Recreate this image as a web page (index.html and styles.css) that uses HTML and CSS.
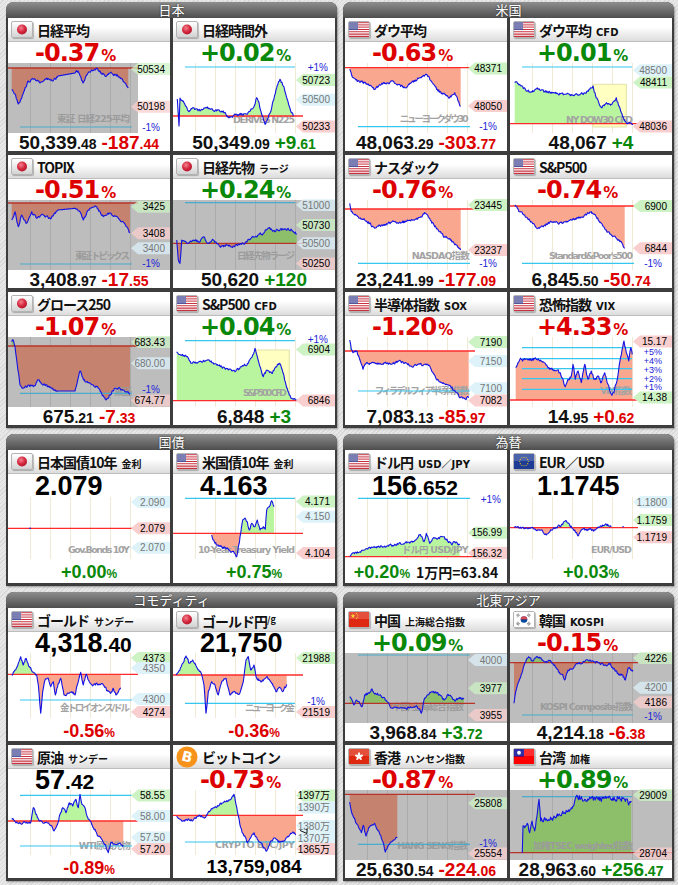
FILE: index.html
```html
<!DOCTYPE html>
<html lang="ja">
<head>
<meta charset="utf-8">
<title>マーケット</title>
<link rel="stylesheet" href="styles.css">
</head>
<body>
<svg class="defs" width="0" height="0" aria-hidden="true">
<defs>
<radialGradient id="jpr" cx=".4" cy=".35" r=".7"><stop offset="0" stop-color="#f3828e"/><stop offset=".6" stop-color="#d3243b"/><stop offset="1" stop-color="#b0182c"/></radialGradient>
<pattern id="st" width="1.8" height="1.6" patternUnits="userSpaceOnUse"><rect x=".5" y=".4" width=".7" height=".7" fill="#d8dcf0"/></pattern>
<polygon id="tg" points="123,0 130,-6 162,-6 162,6 130,6"/>
<g id="jp"><circle cx="10" cy="7.5" r="5" fill="url(#jpr)"/></g>
<g id="us"><rect width="20" height="15" fill="#fff"/><path fill="#c8313e" d="M0 0h20v1.15H0zM0 2.3h20v1.15H0zM0 4.6h20v1.15H0zM0 6.9h20v1.15H0zM0 9.2h20v1.15H0zM0 11.5h20v1.15H0zM0 13.8h20v1.2H0z"/><rect width="9" height="8.05" fill="#3b3f8c"/><rect width="9" height="8.05" fill="url(#st)"/><rect width="20" height="7" fill="#fff" opacity=".22"/></g>
<g id="cn"><rect width="20" height="15" fill="#de2910"/><polygon fill="#ffde00" points="4,1.6 4.54,3.26 6.28,3.26 4.87,4.28 5.41,5.94 4,4.92 2.59,5.94 3.13,4.28 1.72,3.26 3.46,3.26"/><g fill="#ffde00"><circle cx="7.5" cy="1.6" r=".55"/><circle cx="8.8" cy="3" r=".55"/><circle cx="8.8" cy="5" r=".55"/><circle cx="7.5" cy="6.4" r=".55"/></g><rect width="20" height="7" fill="#fff" opacity=".18"/></g>
<g id="kr"><rect width="20" height="15" fill="#fff"/><circle cx="10" cy="7.5" r="3.3" fill="#0047a0"/><path d="M6.7 7.5a3.3 3.3 0 0 1 6.6 0z" fill="#cd2e3a"/><path d="M2.2 3.4l2.4-1.8M2.8 4.2l2.4-1.8M3.4 5l2.4-1.8M14.2 1.6l2.4 1.8M13.6 2.4l2.4 1.8M13 3.2l2.4 1.8M2.2 11.6l2.4 1.8M2.8 10.8l2.4 1.8M3.4 10l2.4 1.8M14.2 13.4l2.4-1.8M13.6 12.6l2.4-1.8M13 11.8l2.4-1.8" stroke="#111" stroke-width=".5"/><rect width="20" height="7" fill="#fff" opacity=".15"/></g>
<g id="hk"><rect width="20" height="15" fill="#de2910"/><g fill="#fff"><ellipse cx="10" cy="5.4" rx="1.1" ry="2.1"/><ellipse cx="10" cy="5.4" rx="1.1" ry="2.1" transform="rotate(72 10 7.5)"/><ellipse cx="10" cy="5.4" rx="1.1" ry="2.1" transform="rotate(144 10 7.5)"/><ellipse cx="10" cy="5.4" rx="1.1" ry="2.1" transform="rotate(216 10 7.5)"/><ellipse cx="10" cy="5.4" rx="1.1" ry="2.1" transform="rotate(288 10 7.5)"/></g><rect width="20" height="7" fill="#fff" opacity=".18"/></g>
<g id="tw"><rect width="20" height="15" fill="#fe0000"/><rect width="10" height="7.5" fill="#000095"/><circle cx="5" cy="3.75" r="1.9" fill="#fff"/><rect width="20" height="7" fill="#fff" opacity=".18"/></g>
<g id="eu"><rect width="20" height="15" fill="#1e3c96"/><g fill="#ffd200"><circle cx="14.3" cy="7.5" r=".55"/><circle cx="13.72" cy="9.65" r=".55"/><circle cx="12.15" cy="11.22" r=".55"/><circle cx="10" cy="11.8" r=".55"/><circle cx="7.85" cy="11.22" r=".55"/><circle cx="6.28" cy="9.65" r=".55"/><circle cx="5.7" cy="7.5" r=".55"/><circle cx="6.28" cy="5.35" r=".55"/><circle cx="7.85" cy="3.78" r=".55"/><circle cx="10" cy="3.2" r=".55"/><circle cx="12.15" cy="3.78" r=".55"/><circle cx="13.72" cy="5.35" r=".55"/></g><rect width="20" height="7" fill="#fff" opacity=".2"/></g>
</defs>
</svg>
<div class="page">

<section class="sec"><h2>日本</h2><div class="cards">

<div class="card eq">
<div class="ttl"><span class="flag"><svg viewBox="0 0 20 15"><use href="#jp"/></svg></span><span class="nm">日経平均</span></div>
<div class="pct dn">-0.37<small>%</small></div>
<div class="chart gray gp" data-base="5" data-pts="3.7,26.3 7,31 10.3,41 13.7,35 17,25 20.3,18 25,16 32,20 38.7,15 45,18 50,13,0 67,10 70,8 75,20 80,10 83,8 88.7,5 92,8 97,13 103.7,10 108.7,13 113.7,16 120.3,25"><svg viewBox="0 0 162 70" width="162" height="70"><g class="f"></g><text class="wm" x="122" y="59" textLength="73">東証 日経225平均</text><path class="ref" d="M0 5H130"/><path class="pm" d="M12 64H124"/><g class="l"></g><text class="pc" x="152" y="67.5">-1%</text><g class="t g" transform="translate(0 6)"><use href="#tg"/><text x="157" y="3.5">50534</text></g><g class="t r" transform="translate(0 43.7)"><use href="#tg"/><text x="157" y="3.5">50198</text></g></svg></div>
<div class="val">50,339<small>.48</small><span class="chg dn">-187<small>.44</small></span></div>
</div>

<div class="card eq">
<div class="ttl"><span class="flag"><svg viewBox="0 0 20 15"><use href="#jp"/></svg></span><span class="nm">日経時間外</span></div>
<div class="pct up">+0.02<small>%</small></div>
<div class="chart" data-base="53" data-pts="4.3,36,0 6,63,0 7,35 10.3,38 15.3,48 20.3,44.7 27,48 33.7,44.7 43.7,48 50.3,48 55.3,54.7 63.7,51.3 73.7,51.3 80.3,44.7 83.7,34.7 85.3,38 88.7,51.3 92,61.3 95.3,54.7 98.7,44.7 103.7,24.7 107,16.3 110.3,23 113.7,34.7 117.7,48 120.3,53"><svg viewBox="0 0 162 70" width="162" height="70"><g class="f"></g><text class="wm" x="122" y="60" textLength="62">DERIVES N225</text><path class="ref" d="M0 53H130"/><path class="pm" d="M12 4H122"/><g class="l"></g><text class="pc" x="155" y="7.5">+1%</text><g class="t g" transform="translate(0 17)"><use href="#tg"/><text x="157" y="3.5">50723</text></g><g class="t b" transform="translate(0 36.7)"><use href="#tg"/><text x="157" y="3.5">50500</text></g><g class="t r" transform="translate(0 63.5)"><use href="#tg"/><text x="157" y="3.5">50233</text></g></svg></div>
<div class="val">50,349<small>.09</small><span class="chg up">+9<small>.61</small></span></div>
</div>

<div class="card eq">
<div class="ttl"><span class="flag"><svg viewBox="0 0 20 15"><use href="#jp"/></svg></span><span class="nm">TOPIX</span></div>
<div class="pct dn">-0.51<small>%</small></div>
<div class="chart gray" data-base="3" data-pts="3.7,20 7,11.7 10.3,26.7 13.7,15 18.7,23.3 23.7,11.7 28.7,18.3 35.3,15 42,18.3 50.3,10,0 67,8.3 72,11.7 75.3,20 80.3,10 88.7,6.7 95.3,16.7 102,13.3 108.7,16.7 113.7,21.7 118.7,26.7 122,32.7"><svg viewBox="0 0 162 70" width="162" height="70"><g class="f"></g><text class="wm" x="122" y="58.5" textLength="55">東証 トピックス</text><path class="ref" d="M0 3H130"/><path class="pm" d="M12 64H124"/><g class="l"></g><text class="pc" x="152" y="67">-1%</text><g class="t g" transform="translate(0 6.7)"><use href="#tg"/><text x="157" y="3.5">3425</text></g><g class="t r" transform="translate(0 33.3)"><use href="#tg"/><text x="157" y="3.5">3408</text></g><g class="t b" transform="translate(0 48.3)"><use href="#tg"/><text x="157" y="3.5">3400</text></g></svg></div>
<div class="val">3,408<small>.97</small><span class="chg dn">-17<small>.55</small></span></div>
</div>

<div class="card eq">
<div class="ttl"><span class="flag"><svg viewBox="0 0 20 15"><use href="#jp"/></svg></span><span class="nm">日経先物<small>ラージ</small></span></div>
<div class="pct up">+0.24<small>%</small></div>
<div class="chart gray" data-base="43.3" data-pts="3.7,40 5.3,60 7,63.3 8.7,40 13.7,43.3 20.3,40 27,41.7 31,36.7 35.3,43.3 40.3,40 47,46.7 53.7,45 60.3,46 70.3,44 75.3,40 80.3,36.7 90.3,33.3 95.3,28.3 100.3,30.7 110.3,29.3 118.7,30 123.7,34"><svg viewBox="0 0 162 70" width="162" height="70"><g class="f"></g><text class="wm" x="122" y="58.5" textLength="58">日経先物ラージ</text><path class="ref" d="M0 43.3H130"/><path class="pm" d="M12 2.7H122"/><g class="l"></g><g class="t b" transform="translate(0 5)"><use href="#tg"/><text x="157" y="3.5">51000</text></g><g class="t g" transform="translate(0 25)"><use href="#tg"/><text x="157" y="3.5">50730</text></g><g class="t b" transform="translate(0 43.3)"><use href="#tg"/><text x="157" y="3.5">50500</text></g><g class="t r" transform="translate(0 63.5)"><use href="#tg"/><text x="157" y="3.5">50250</text></g></svg></div>
<div class="val">50,620<span class="chg up">+120</span></div>
</div>

<div class="card eq">
<div class="ttl"><span class="flag"><svg viewBox="0 0 20 15"><use href="#jp"/></svg></span><span class="nm">グロース250</span></div>
<div class="pct dn">-1.07<small>%</small></div>
<div class="chart gray" data-base="9" data-pts="3.7,4.7 5.3,3 7,9.7 9.3,28 12,48 15.3,51.3 20.3,48 25.3,49.7 30.3,43 35.3,48 42,49.7 48.7,54,0 67,54 72,34 77,44.7 82,46.3 88.7,49.7 93.7,56.3 98,63 102,58 107,51.3 112,51.3 117,54.7 122,57.3"><svg viewBox="0 0 162 70" width="162" height="70"><g class="f"></g><text class="wm" x="124" y="58" textLength="18">東証</text><path class="ref" d="M0 9H130"/><path class="pm" d="M12 56.3H124"/><g class="l"></g><text class="pc" x="152" y="55.5">-1%</text><g class="t g" transform="translate(0 5)"><use href="#tg"/><text x="157" y="3.5">683.43</text></g><g class="t b" transform="translate(0 26.3)"><use href="#tg"/><text x="157" y="3.5">680.00</text></g><g class="t r" transform="translate(0 63.5)"><use href="#tg"/><text x="157" y="3.5">674.77</text></g></svg></div>
<div class="val">675<small>.21</small><span class="chg dn">-7<small>.33</small></span></div>
</div>

<div class="card eq">
<div class="ttl"><span class="flag"><svg viewBox="0 0 20 15"><use href="#us"/></svg></span><span class="nm">S&amp;P500<small>CFD</small></span></div>
<div class="pct up">+0.04<small>%</small></div>
<div class="chart" data-base="63.7" data-pts="3.7,14.7 8.7,18 13.7,19.7 18.7,26.3 27,24.7 35.3,23 43.7,28 48.7,29.7 55.3,33 62,34.7 68.7,29.7 75.3,26.3 79.7,18 82,11.3 84.3,19.7 87.7,31.3 90.3,39.7 93.7,33 98.7,36.3 103,29.7 106.3,26.3 109.7,34.7 113,48 116.3,58 118.7,61.3 123.7,63"><svg viewBox="0 0 162 70" width="162" height="70"><rect class="yb" x="82" y="13" width="34.3" height="50.7"/><g class="f"></g><text class="wm" x="114" y="58.8" textLength="44">S&amp;P500 CFD</text><path class="ref" d="M0 63.7H162"/><path class="pm" d="M12 3.7H122"/><g class="l"></g><text class="pc" x="155" y="5.5">+1%</text><g class="t g" transform="translate(0 12.5)"><use href="#tg"/><text x="157" y="3.5">6904</text></g><g class="t r" transform="translate(0 63.5)"><use href="#tg"/><text x="157" y="3.5">6846</text></g></svg></div>
<div class="val">6,848<span class="chg up">+3</span></div>
</div>

</div></section>

<section class="sec"><h2>米国</h2><div class="cards">

<div class="card eq">
<div class="ttl"><span class="flag"><svg viewBox="0 0 20 15"><use href="#us"/></svg></span><span class="nm">ダウ平均</span></div>
<div class="pct dn">-0.63<small>%</small></div>
<div class="chart" data-base="4.7" data-pts="4.7,6.3 8,14.7 13,18 19.7,19.7 26.3,23 29.7,26.3 36.3,21.3 43,19.7 48,18 53,21.3 59.7,24.7 66.3,19.7 74.7,14.7 81.3,11.3 86.3,18 93,28 99.7,31.3 104.7,34.7 109.7,29.7 113,38 115.7,43"><svg viewBox="0 0 162 70" width="162" height="70"><g class="f"></g><text class="wm" x="123.7" y="59.2" textLength="69">ニューヨークダウ30</text><path class="ref" d="M0 4.7H130"/><path class="pm" d="M13 63.7H125"/><g class="l"></g><text class="pc" x="152" y="67.2">-1%</text><g class="t g" transform="translate(0 5.5)"><use href="#tg"/><text x="157" y="3.5">48371</text></g><g class="t r" transform="translate(0 43)"><use href="#tg"/><text x="157" y="3.5">48050</text></g></svg></div>
<div class="val">48,063<small>.29</small><span class="chg dn">-303<small>.77</small></span></div>
</div>

<div class="card eq">
<div class="ttl"><span class="flag"><svg viewBox="0 0 20 15"><use href="#us"/></svg></span><span class="nm">ダウ平均<small>CFD</small></span></div>
<div class="pct up">+0.01<small>%</small></div>
<div class="chart" data-base="60.7" data-pts="4.7,19.7 9.7,21.3 16.3,28 21.3,28.7 28,26.3 34.7,28.7 44.7,29.7 54.7,31.3 64.7,32 74.7,29.7 79.7,26.3 83,23 86.3,34.7 91.3,44.7 96.3,39.7 101.3,41.3 106.3,34.7 110.7,48 114.7,58 118,60.7 123,61.3"><svg viewBox="0 0 162 70" width="162" height="70"><rect class="yb" x="83" y="21.3" width="33.3" height="42.7"/><g class="f"></g><text class="wm" x="123" y="59.8" textLength="67">NY DOW30 CFD</text><path class="ref" d="M0 60.7H162"/><path class="pm" d="M12 4H122"/><g class="l"></g><g class="t b" transform="translate(0 7.3)"><use href="#tg"/><text x="157" y="3.5">48500</text></g><g class="t g" transform="translate(0 19.5)"><use href="#tg"/><text x="157" y="3.5">48411</text></g><g class="t r" transform="translate(0 63.5)"><use href="#tg"/><text x="157" y="3.5">48036</text></g></svg></div>
<div class="val">48,067<span class="chg up">+4</span></div>
</div>

<div class="card eq">
<div class="ttl"><span class="flag"><svg viewBox="0 0 20 15"><use href="#us"/></svg></span><span class="nm">ナスダック</span></div>
<div class="pct dn">-0.76<small>%</small></div>
<div class="chart" data-base="9" data-pts="4.7,3.3 6.3,11.7 9.7,15 14.7,18.3 19.7,20 24.7,23.3 29.7,28.3 36.3,25 43,23.3 49.7,21.7 56.3,22.7 63,20.7 69.7,20 76.3,16.7 80.3,13.3 84.7,18.3 89.7,26.7 94.7,31.7 99.7,36.7 106.3,40 111.3,45 115.7,50"><svg viewBox="0 0 162 70" width="162" height="70"><g class="f"></g><text class="wm" x="124.7" y="58.5" textLength="58">NASDAQ指数</text><path class="ref" d="M0 9H130"/><path class="pm" d="M13 63.3H125"/><g class="l"></g><text class="pc" x="152" y="66.8">-1%</text><g class="t g" transform="translate(0 5)"><use href="#tg"/><text x="157" y="3.5">23445</text></g><g class="t r" transform="translate(0 50)"><use href="#tg"/><text x="157" y="3.5">23237</text></g></svg></div>
<div class="val">23,241<small>.99</small><span class="chg dn">-177<small>.09</small></span></div>
</div>

<div class="card eq">
<div class="ttl"><span class="flag"><svg viewBox="0 0 20 15"><use href="#us"/></svg></span><span class="nm">S&amp;P500</span></div>
<div class="pct dn">-0.74<small>%</small></div>
<div class="chart" data-base="6" data-pts="4.7,5 9.7,11.7 14.7,15 21.3,21.7 28,28.3 34.7,25 41.3,21.7 48,23.3 54.7,21.7 61.3,20 68,18.3 74.7,15 81.3,11.7 86.3,16.7 91.3,23.3 96.3,30 101.3,35 106.3,38.3 111.3,41.7 114.7,48.3"><svg viewBox="0 0 162 70" width="162" height="70"><g class="f"></g><text class="wm" x="123" y="58.5" textLength="84">Standard&amp;Poor's500</text><path class="ref" d="M0 6H130"/><path class="pm" d="M12 63.3H124"/><g class="l"></g><text class="pc" x="152" y="66.8">-1%</text><g class="t g" transform="translate(0 6)"><use href="#tg"/><text x="157" y="3.5">6900</text></g><g class="t r" transform="translate(0 48.3)"><use href="#tg"/><text x="157" y="3.5">6844</text></g></svg></div>
<div class="val">6,845<small>.50</small><span class="chg dn">-50<small>.74</small></span></div>
</div>

<div class="card eq">
<div class="ttl"><span class="flag"><svg viewBox="0 0 20 15"><use href="#us"/></svg></span><span class="nm">半導体指数<small>SOX</small></span></div>
<div class="pct dn">-1.20<small>%</small></div>
<div class="chart" data-base="14" data-pts="4.7,3 6.3,12.3 8,15.7 11.3,14 14.7,22.3 18,32.3 21.3,26 26.3,26 33,27.3 39.7,26 46.3,27.3 53,24 59.7,26 66.3,29 73,27.3 79.7,27.3 84.7,29 88,35.7 91.3,42.3 96.3,45.7 101.3,47.3 106.3,50.7 111.3,55.7 114.7,60.7 119.7,61.7 123.7,60.7"><svg viewBox="0 0 162 70" width="162" height="70"><g class="f"></g><text class="wm" x="124.7" y="56.5" textLength="95">フィラデルフィア半導体指数</text><path class="ref" d="M0 14H130"/><path class="pm" d="M13 54H125"/><g class="l"></g><g class="t g" transform="translate(0 5)"><use href="#tg"/><text x="157" y="3.5">7190</text></g><g class="t b" transform="translate(0 24)"><use href="#tg"/><text x="157" y="3.5">7150</text></g><g class="t b" transform="translate(0 51.2)"><use href="#tg"/><text x="157" y="3.5">7100</text></g><g class="t r" transform="translate(0 63.5)"><use href="#tg"/><text x="157" y="3.5">7082</text></g></svg></div>
<div class="val">7,083<small>.13</small><span class="chg dn">-85<small>.97</small></span></div>
</div>

<div class="card eq">
<div class="ttl"><span class="flag"><svg viewBox="0 0 20 15"><use href="#us"/></svg></span><span class="nm">恐怖指数<small>VIX</small></span></div>
<div class="pct dn">+4.33<small>%</small></div>
<div class="chart" data-inv="1" data-n="1.5" data-base="63" data-pts="5.7,30.7 8,25.7 11.3,22.3 18,23 24.7,21.7 29.7,24 34.7,25.7 39.7,32.3 44.7,33 49.7,35.7 53,42.3 55.3,49.7 58,42.3 61.3,39 63,27.3 65.3,42.3 68,34 71.3,45.7 74.7,27.3 78,42.3 81.3,34 84.7,42.3 88,39 91.3,45.7 94.7,35.7 98,47.3 101.3,57.3 104,55.7 107.3,42.3 110.7,20 114,4 116.3,15.7 118.7,24 120.7,10.7 122.3,17.3"><svg viewBox="0 0 162 70" width="162" height="70"><g class="f"></g><text class="wm" x="122" y="56.5" textLength="32">VIX指数</text><path class="ref" d="M0 63H128"/><path class="pm" d="M12 10.7H122M12 21.7H122M12 31.7H122M12 41.7H122M12 52.3H122"/><g class="l"></g><text class="pc sm" x="152" y="17.5">+5%</text><text class="pc sm" x="152" y="26.5">+4%</text><text class="pc sm" x="152" y="35.5">+3%</text><text class="pc sm" x="152" y="44.5">+2%</text><text class="pc sm" x="152" y="53">+1%</text><g class="t r" transform="translate(0 4.5)"><use href="#tg"/><text x="157" y="3.5">15.17</text></g><g class="t g" transform="translate(0 60.5)"><use href="#tg"/><text x="157" y="3.5">14.38</text></g></svg></div>
<div class="val">14<small>.95</small><span class="chg dn">+0<small>.62</small></span></div>
</div>

</div></section>

<section class="sec"><h2>国債</h2><div class="cards">

<div class="card bd">
<div class="ttl"><span class="flag"><svg viewBox="0 0 20 15"><use href="#jp"/></svg></span><span class="nm">日本国債10年<small>金利</small></span></div>
<div class="big">2.079</div>
<div class="chart" data-base="31.3" data-pts="21,31.3,0 23,31.3"><svg viewBox="0 0 162 62" width="162" height="62"><g class="f"></g><text class="wm" x="122" y="55.8" textLength="62">Gov.Bonds 10Y</text><path class="ref" d="M0 31.3H130"/><g class="l"></g><g class="t b" transform="translate(0 5)"><use href="#tg"/><text x="157" y="3.5">2.090</text></g><g class="t r" transform="translate(0 31.3)"><use href="#tg"/><text x="157" y="3.5">2.079</text></g><g class="t b" transform="translate(0 50.7)"><use href="#tg"/><text x="157" y="3.5">2.070</text></g></svg></div>
<div class="bp up">+0.00<small>%</small></div>
</div>

<div class="card bd">
<div class="ttl"><span class="flag"><svg viewBox="0 0 20 15"><use href="#us"/></svg></span><span class="nm">米国債10年<small>金利</small></span></div>
<div class="big">4.163</div>
<div class="chart" data-base="36.3" data-pts="38.7,38 42,46.3 45.3,48 48.7,49.7 53.7,51.3 58.7,54.7 62,56.3 63.7,59.7 65.7,48 67.7,36.3 69.7,23 72,21 74.3,24.7 76.3,33 78.7,26.3 82,29.7 84.3,23 87,33 90.3,29.7 92.3,32.3 93.7,13 96.3,9.7 98.7,3.7 101,9.7"><svg viewBox="0 0 162 62" width="162" height="62"><g class="f"></g><text class="wm" x="122" y="55.8" textLength="97">10-Year Treasury Yield</text><path class="ref" d="M0 36.3H130"/><path class="pm" d="M12 1.3H122"/><g class="l"></g><g class="t g" transform="translate(0 4.5)"><use href="#tg"/><text x="157" y="3.5">4.171</text></g><g class="t b" transform="translate(0 19.7)"><use href="#tg"/><text x="157" y="3.5">4.150</text></g><g class="t r" transform="translate(0 56)"><use href="#tg"/><text x="157" y="3.5">4.104</text></g></svg></div>
<div class="bp up">+0.75<small>%</small></div>
</div>

</div></section>

<section class="sec"><h2>為替</h2><div class="cards">

<div class="card bd">
<div class="ttl"><span class="flag"><svg viewBox="0 0 20 15"><use href="#us"/></svg></span><span class="nm">ドル円<small>USD／JPY</small></span></div>
<div class="big">156<small>.652</small></div>
<div class="chart" data-base="59.7" data-pts="4.7,59 8,55.7 13,55.7 19.7,53 26.3,50.3 33,49.7 39.7,49 46.3,48 53,47.3 59.7,46.3 66.3,44.7 71.3,42.3 74.7,38 77,39.7 79,44.7 81.3,36.3 84.7,46.3 88,41.3 93,41.3 98,39.7 101.3,43 106.3,47 109.7,45 114.7,48"><svg viewBox="0 0 162 62" width="162" height="62"><g class="f"></g><text class="wm" x="123.7" y="55.8" textLength="67">ドル円 USD/JPY</text><path class="ref" d="M0 59.7H130"/><path class="pm" d="M13 1.3H125"/><g class="l"></g><text class="pc" x="156" y="6">+1%</text><g class="t g" transform="translate(0 35.7)"><use href="#tg"/><text x="157" y="3.5">156.99</text></g><g class="t r" transform="translate(0 56)"><use href="#tg"/><text x="157" y="3.5">156.32</text></g></svg></div>
<div class="bp"><span class="up">+0.20<small>%</small></span><span class="yen">1万円=63.84</span></div>
</div>

<div class="card bd">
<div class="ttl"><span class="flag"><svg viewBox="0 0 20 15"><use href="#eu"/></svg></span><span class="nm">EUR／USD</span></div>
<div class="big">1.1745</div>
<div class="chart" data-base="30.7" data-pts="4,30.3 14.7,31.3 24.7,32 31.3,33 36.3,38 41.3,33 46.3,30.3 51.3,28 56.3,23.7 59.7,28 64.7,33 68,39 71.3,33 76.3,32.3 83,33 89.7,30.3 96.3,27.3 101.3,29.7"><svg viewBox="0 0 162 62" width="162" height="62"><g class="f"></g><text class="wm" x="122" y="55.8" textLength="41">EUR/USD</text><path class="ref" d="M0 30.7H128"/><g class="l"></g><path class="ln" d="M112.3 29.7h1.6"/><g class="t b" transform="translate(0 5)"><use href="#tg"/><text x="157" y="3.5">1.1800</text></g><g class="t g" transform="translate(0 23)"><use href="#tg"/><text x="157" y="3.5">1.1759</text></g><g class="t r" transform="translate(0 40.3)"><use href="#tg"/><text x="157" y="3.5">1.1719</text></g></svg></div>
<div class="bp up">+0.03<small>%</small></div>
</div>

</div></section>

<section class="sec"><h2>コモディティ</h2><div class="cards">

<div class="card cm">
<div class="ttl"><span class="flag"><svg viewBox="0 0 20 15"><use href="#us"/></svg></span><span class="nm">ゴールド<small>サンデー</small></span></div>
<div class="big">4,318<small>.40</small></div>
<div class="chart" data-base="21.3" data-pts="3.7,22 5.3,19.3 7,17 10.3,10.3 12.7,3.7 15.3,12 18,5.3 21.3,13.7 25.3,19.3 28.7,22 30.3,32 32.7,60.3 34.7,38.7 37,27 40.3,25.3 42.7,33.7 45.3,28.7 47.3,42 50.3,30.3 52.7,25.3 56,42 60.3,40.3 63.7,38.7 67,42 70.3,28.7 72.7,19.3 75.3,32 78,21.3 81.3,28.7 85.3,32 90.3,31.3 95.3,32 99.3,38 102.7,40.3 105.3,35.3 108,42 112.7,34.7"><svg viewBox="0 0 162 65" width="162" height="65"><g class="f"></g><text class="wm" x="122" y="57.8" textLength="70">金トロイオンス/ドル</text><path class="ref" d="M0 21.3H130"/><path class="pm" d="M12 47H124"/><g class="l"></g><g class="t g" transform="translate(0 5)"><use href="#tg"/><text x="157" y="3.5">4373</text></g><g class="t b" transform="translate(0 15)"><use href="#tg"/><text x="157" y="3.5">4350</text></g><g class="t b" transform="translate(0 46)"><use href="#tg"/><text x="157" y="3.5">4300</text></g><g class="t r" transform="translate(0 59)"><use href="#tg"/><text x="157" y="3.5">4274</text></g></svg></div>
<div class="bp dn">-0.56<small>%</small></div>
</div>

<div class="card cm">
<div class="ttl"><span class="flag"><svg viewBox="0 0 20 15"><use href="#jp"/></svg></span><span class="nm">ゴールド円<sup class="fr">/g</sup></span></div>
<div class="big">21,750</div>
<div class="chart" data-base="22" data-pts="3,22 5.3,19.3 9.7,10.3 13,3 16.3,10.3 19.7,7 24.3,15.3 28.7,21.3 31,32 33,60.3 35.3,38.7 38.7,28.7 42,32 45.3,42 48.7,28.7 53,25.3 57,42 62,38.7 66.3,41.3 70.3,28.7 73,7 75.3,3.7 77.7,17 81,12 83.7,25.3 88.7,28.7 93.7,23.7 98.7,30.3 103,38.7 107,34.7 109.7,38.7 113.7,31.3"><svg viewBox="0 0 162 65" width="162" height="65"><g class="f"></g><text class="wm" x="122" y="58.2" textLength="50">ニューヨーク金</text><path class="ref" d="M0 22H130"/><path class="pm" d="M12 50.3H122"/><g class="l"></g><text class="pc" x="152" y="51.5">-1%</text><g class="t g" transform="translate(0 5)"><use href="#tg"/><text x="157" y="3.5">21988</text></g><g class="t r" transform="translate(0 59)"><use href="#tg"/><text x="157" y="3.5">21519</text></g></svg></div>
<div class="bp dn">-0.36<small>%</small></div>
</div>

<div class="card cm">
<div class="ttl"><span class="flag"><svg viewBox="0 0 20 15"><use href="#us"/></svg></span><span class="nm">原油<small>サンデー</small></span></div>
<div class="big">57<small>.42</small></div>
<div class="chart" data-base="31" data-pts="3.7,29.3 8.7,32 13.7,34.3 18.7,32 22.7,32.7 25.3,17.7 28,24.3 31.3,31 35.3,33.3 40.3,32.7 43.7,36 46,41 48.7,36 52,24.3 54.7,17.7 58,22.7 61.3,12.7 64.7,16 68,9.3 70.3,17.7 72,4.3 74,14.3 77,17.7 80.3,29.3 83.7,34.3 87,39.3 90.3,46 93.7,49.3 97,54.3 100.3,62.7 102.7,52.7 107,54.3 111.3,53.3 115.3,55.3"><svg viewBox="0 0 162 65" width="162" height="65"><g class="f"></g><text class="wm" x="122.7" y="58.8" textLength="52">WTI原油先物</text><path class="ref" d="M0 31H130"/><path class="pm" d="M12 5.3H124M12 56H124"/><g class="l"></g><g class="t g" transform="translate(0 5.5)"><use href="#tg"/><text x="157" y="3.5">58.55</text></g><g class="t b" transform="translate(0 26)"><use href="#tg"/><text x="157" y="3.5">58.00</text></g><g class="t b" transform="translate(0 47.5)"><use href="#tg"/><text x="157" y="3.5">57.50</text></g><g class="t r" transform="translate(0 59)"><use href="#tg"/><text x="157" y="3.5">57.20</text></g></svg></div>
<div class="bp dn">-0.89<small>%</small></div>
</div>

<div class="card cm">
<div class="ttl"><span class="btc"><svg viewBox="0 0 22 22" width="22" height="22"><circle cx="11" cy="11" r="10.5" fill="#f7931a"/><text class="bt" x="11" y="15.8" transform="rotate(14 11 11)">B</text></svg></span><span class="nm">ビットコイン</span></div>
<div class="pct dn">-0.73<small>%</small></div>
<div class="chart" data-base="25.3" data-pts="3.7,26 7,29.3 10.3,31 15.3,28.7 20.3,30 27,26 32,27.7 37,21 40.3,17.7 45.3,16 50.3,12.7 55.3,11 58.7,7.7 61,4.3 63,14.3 65.3,26 67.7,37.7 71,46 74.3,52.7 77.7,47.7 81,42.7 84.3,49.3 87.7,52.7 91,57.7 93.7,61 97,52.7 101,47.7 105.3,52 109.7,51 113.7,47.7 117.7,43.3 120.3,42 123,44.7"><svg viewBox="0 0 162 65" width="162" height="65"><g class="f"></g><text class="wm" x="122" y="57.8" textLength="80">CRYPTO BTC/JPY</text><path class="ref" d="M0 25.3H130"/><path class="pm" d="M12 52H122"/><g class="l"></g><g class="t g" transform="translate(0 5.5)"><use href="#tg"/><text x="157" y="3.5">1397万</text></g><g class="t b" transform="translate(0 17.5)"><use href="#tg"/><text x="157" y="3.5">1390万</text></g><g class="t b" transform="translate(0 36)"><use href="#tg"/><text x="157" y="3.5">1380万</text></g><g class="t b" transform="translate(0 48)"><use href="#tg"/><text x="157" y="3.5">1370万</text></g><g class="t r" transform="translate(0 59)"><use href="#tg"/><text x="157" y="3.5">1365万</text></g><path class="mk" d="M127 40.5L134 43.5V38.5"/></svg></div>
<div class="bv">13,759,084</div>
</div>

</div></section>

<section class="sec"><h2>北東アジア</h2><div class="cards">

<div class="card eq">
<div class="ttl"><span class="flag"><svg viewBox="0 0 20 15"><use href="#cn"/></svg></span><span class="nm">中国<small>上海総合指数</small></span></div>
<div class="pct up">+0.09<small>%</small></div>
<div class="chart gray" data-base="50.3" data-pts="4.7,43.7 7,47 9,52 11.3,47 14.7,50.3 17,53.7 19.7,42 23,40.3 27,36 30.3,40.3 34.7,42 39.7,45.3 43,49.3 45.7,54.7,0.6 59.7,55.3 66.3,54.7 71.3,52.7 74.7,56 76.3,60.3 79,47 82.3,42 86.3,38.7 91.3,40.3 95.7,42.7 99,47 102.3,42 106.3,43.7 109.7,48 113.7,45.3 119,46"><svg viewBox="0 0 162 70" width="162" height="70"><g class="f"></g><text class="wm" x="119" y="57.2" textLength="72">中国 上海総合指数</text><path class="ref" d="M0 50.3H130"/><path class="pm" d="M13 2H125"/><g class="l"></g><g class="t b" transform="translate(0 7)"><use href="#tg"/><text x="157" y="3.5">4000</text></g><g class="t g" transform="translate(0 35.3)"><use href="#tg"/><text x="157" y="3.5">3977</text></g><g class="t r" transform="translate(0 62)"><use href="#tg"/><text x="157" y="3.5">3955</text></g></svg></div>
<div class="val">3,968<small>.84</small><span class="chg up">+3<small>.72</small></span></div>
</div>

<div class="card eq">
<div class="ttl"><span class="flag"><svg viewBox="0 0 20 15"><use href="#kr"/></svg></span><span class="nm">韓国<small>KOSPI</small></span></div>
<div class="pct dn">-0.15<small>%</small></div>
<div class="chart gray" data-base="9.7" data-pts="4,50.3 5.7,38.7 8,30.3 10.7,23.7 13.3,14.7 16.3,7 18.7,3.7 22,8 26.3,3.7 30.7,4.7 34.7,9.3 39.7,8 44.7,12 48.7,19.3 52,21.3 54.7,27 57.3,19.3 61.3,16 65.3,12 69.7,10.3 74.7,8.7 79.7,7 84.7,8.7 89.7,10.3 94.7,12 99.7,11.3 104,15.3 108,20.3 112,22 115.3,27 118,15.3 123,17"><svg viewBox="0 0 162 70" width="162" height="70"><g class="f"></g><text class="wm" x="123" y="57.2" textLength="93">KOSPI Composite指数</text><path class="ref" d="M0 9.7H128"/><path class="pm" d="M12 62H123"/><g class="l"></g><text class="pc" x="152" y="66.5">-1%</text><g class="t g" transform="translate(0 5)"><use href="#tg"/><text x="157" y="3.5">4226</text></g><g class="t b" transform="translate(0 34.7)"><use href="#tg"/><text x="157" y="3.5">4200</text></g><g class="t r" transform="translate(0 49.3)"><use href="#tg"/><text x="157" y="3.5">4186</text></g></svg></div>
<div class="val">4,214<small>.18</small><span class="chg dn">-6<small>.38</small></span></div>
</div>

<div class="card eq">
<div class="ttl"><span class="flag"><svg viewBox="0 0 20 15"><use href="#hk"/></svg></span><span class="nm">香港<small>ハンセン指数</small></span></div>
<div class="pct dn">-0.87<small>%</small></div>
<div class="chart gray" data-base="4.3" data-pts="4.7,12 6.3,21 8.7,27.7 11.3,33.3 13.7,37.7 16.3,42.7 18.3,35.3 21,46 23.7,37.7 26.3,35.3 29.7,33.3 32.3,39.3 35.7,45.3 38,52 40.3,62 43,56 45.7,52 49,50 52.3,47.7"><svg viewBox="0 0 162 70" width="162" height="70"><g class="f"></g><text class="wm" x="123" y="58.5" textLength="71">HANG SENG指数</text><path class="ref" d="M0 4.3H130"/><path class="pm" d="M13 54.3H125"/><g class="l"></g><text class="pc" x="152" y="56.8">-1%</text><g class="t g" transform="translate(0 13.3)"><use href="#tg"/><text x="157" y="3.5">25808</text></g><g class="t r" transform="translate(0 63.5)"><use href="#tg"/><text x="157" y="3.5">25554</text></g></svg></div>
<div class="val">25,630<small>.54</small><span class="chg dn">-224<small>.06</small></span></div>
</div>

<div class="card eq">
<div class="ttl"><span class="flag"><svg viewBox="0 0 20 15"><use href="#tw"/></svg></span><span class="nm">台湾<small>加権</small></span></div>
<div class="pct up">+0.89<small>%</small></div>
<div class="chart gray" data-n="2.6" data-base="62.7" data-pts="12.3,62.7,0 13,36 14.7,37.7 17.3,33.3 19.7,42.7 22,31 24.7,41 27,26 29,9.3 30.7,31 34.7,27.7 41.3,29.3 48,26 54.7,22.7 61.3,17.7 64.7,11 67.3,6 74.7,9.3 81.3,7.7 88,9.3 94.7,7.7 101.3,9.3 108,7.7 114.7,9.3 118,12.7 121.3,11"><svg viewBox="0 0 162 70" width="162" height="70"><g class="f"></g><text class="wm" x="123" y="58.5" textLength="100">加権TSEC weighted指数</text><path class="ref" d="M0 62.7H162"/><path class="pm" d="M12 6.7H122"/><g class="l"></g><g class="t g" transform="translate(0 5)"><use href="#tg"/><text x="157" y="3.5">29009</text></g><g class="t r" transform="translate(0 63.5)"><use href="#tg"/><text x="157" y="3.5">28704</text></g></svg></div>
<div class="val">28,963<small>.60</small><span class="chg up">+256<small>.47</small></span></div>
</div>

</div></section>

</div>
<script src="script.js"></script>
</body>
</html>
```

FILE: styles.css
```css
* { box-sizing: border-box; }
html, body { margin: 0; }
body {
  width: 678px;
  height: 885px;
  overflow: hidden;
  background: #e0e0e0 repeating-linear-gradient(135deg, #e8e8e8 0 2px, #d9d9d9 2px 3px);
  font-family: "DejaVu Sans", "Noto Sans CJK JP", sans-serif;
}
.defs { display: block; width: 0; height: 0; }
.page {
  display: grid;
  grid-template-columns: 331px 331px;
  gap: 6px;
  padding: 2px 0 0 6px;
}
.sec {
  background: #3d3d3d;
  border-radius: 8px 8px 0 0;
  padding: 0 2px 3px;
  box-shadow: 1px 1px 2px rgba(0,0,0,.35);
}
.sec h2 {
  margin: 0 -2px;
  height: 16px;
  border-radius: 8px 8px 0 0;
  background: linear-gradient(180deg, #8e8e8e 0%, #6a6a6a 55%, #4e4e4e 100%);
  font: 400 13px/16px "Noto Sans CJK JP", sans-serif;
  color: #fff;
  text-align: center;
  text-shadow: 0 0 2px #222;
}
.cards {
  display: grid;
  grid-template-columns: 162px 162px;
  gap: 4px 3px;
}
.card {
  background: #fff;
  height: 133px;
  display: flex;
  flex-direction: column;
}
.ttl {
  flex: none;
  height: 24px;
  display: flex;
  align-items: flex-start;
  padding: 3px 0 0 3px;
  background: linear-gradient(#fff 0%, #fff 40%, #dcdcdc 100%);
  border-bottom: 1px solid #bdbdbd;
}
.flag {
  flex: none;
  width: 22px;
  height: 17px;
  border: 1px solid #b3b3b3;
  border-radius: 2px;
  background: linear-gradient(#fff, #d3d3d3);
  box-shadow: 1px 1px 1px rgba(0,0,0,.25);
  display: flex;
  align-items: center;
  justify-content: center;
}
.flag svg { display: block; width: 20px; height: 15px; }
.btc { flex: none; width: 22px; height: 22px; margin-top: -2px; }
.btc svg { display: block; }
.bt { font: 700 14px "DejaVu Sans", sans-serif; fill: #fff; text-anchor: middle; }
.nm {
  margin-left: 4px;
  font: 700 14px/18px "Noto Sans CJK JP", sans-serif;
  letter-spacing: -1px;
  color: #111;
  white-space: nowrap;
}
.nm small {
  font: 700 10px "DejaVu Sans", "Noto Sans CJK JP", sans-serif;
  letter-spacing: 0;
  margin-left: 5px;
}
.nm .fr { font-size: 9px; letter-spacing: 0; vertical-align: 4px; }

.dn { color: #dd0000; }
.up { color: #0a880a; }

.pct {
  flex: none;
  height: 21px;
  padding-left: 27px;
  font: 700 24px/22px "DejaVu Sans", sans-serif;
  letter-spacing: -1px;
  white-space: nowrap;
}
.pct small { font-size: 15px; letter-spacing: 0; margin-left: 2px; }

.chart { flex: none; position: relative; }
.chart svg { display: block; overflow: visible; }
.gray { background: #bdbdbd; }
.gp { background: linear-gradient(90deg, #bdbdbd 0 130px, #fff 130px); }

.val {
  flex: none;
  height: 18px;
  text-align: center;
  font: 700 19px/19px "Liberation Sans", sans-serif;
  color: #111;
  white-space: nowrap;
}
.val small { font-size: 14px; }
.val .chg { margin-left: 5px; font-size: 19px; }
.val .chg small { font-size: 14px; }

.big {
  flex: none;
  height: 23px;
  padding-left: 27px;
  font: 700 27px/24px "Liberation Sans", sans-serif;
  color: #000;
  white-space: nowrap;
}
.big small { font-size: 21px; }
.cm .big { height: 21px; line-height: 22px; }

.bp {
  flex: none;
  height: 24px;
  text-align: center;
  font: 700 18px/27px "Liberation Sans", sans-serif;
  white-space: nowrap;
}
.bp small { font-size: 12px; }
.cm .bp { height: 23px; line-height: 26px; }
.bp .yen { font: 700 14px "Noto Sans CJK JP", sans-serif; color: #111; margin-left: 6px; }
.bv {
  flex: none;
  height: 23px;
  text-align: center;
  font: 700 19px/24px "Liberation Sans", sans-serif;
  color: #000;
}

/* chart drawing */
.vg { stroke: #efe9d6; stroke-width: 1; fill: none; }
.gray .vg { stroke: #ababab; }
.fu { fill: #b9f49e; }
.fd { fill: #f9a78f; }
.gray .fu { fill: #8dbf6a; }
.gray .fd { fill: #c5826e; }
.yb { fill: #ffffc2; stroke: #e2e2a6; stroke-width: 1; }
.ref { stroke: #ff2b2b; stroke-width: 1.3; fill: none; }
.gray .ref { stroke: #b8342a; }
.pm { stroke: #37c6ef; stroke-width: 1.2; fill: none; }
.gray .pm { stroke: #4aaccc; }
.ln { fill: none; stroke: #1212e6; stroke-width: 1.1; stroke-linejoin: round; }
.mk { fill: none; stroke: #111; stroke-width: 1; }
.wm {
  font: 700 9.5px "DejaVu Sans", "Noto Sans CJK JP", sans-serif;
  fill: #a3a3a3;
  text-anchor: end;
}
.gray .wm { fill: #9b9b9b; }
.t.g { fill: #cdf2c4; }
.t.r { fill: #f9cece; }
.t.b { fill: #ddf2f9; }
.gray .t use { opacity: .75; }
.t text {
  font: 10px "Liberation Sans", "Noto Sans CJK JP", sans-serif;
  fill: #000;
  text-anchor: end;
}
.t.b text { fill: #777; }
.pc {
  font: 10px "Liberation Sans", sans-serif;
  fill: #2323d8;
  text-anchor: end;
}
.pc.sm { font-size: 9px; }
```

FILE: script.js
```js
(function () {
  var NS = 'http://www.w3.org/2000/svg';
  var seed = 1;
  function rnd() { seed = (seed * 16807) % 2147483647; return seed / 2147483647; }
  function el(tag, attrs, parent) {
    var e = document.createElementNS(NS, tag);
    for (var k in attrs) e.setAttribute(k, attrs[k]);
    if (parent) parent.appendChild(e);
    return e;
  }
  function f1(v) { return (Math.round(v * 10) / 10).toString(); }
  var charts = document.querySelectorAll('.chart');
  for (var i = 0; i < charts.length; i++) {
    var c = charts[i], svg = c.querySelector('svg');
    var H = +svg.getAttribute('viewBox').split(' ')[3];
    var d = '';
    for (var gx = 22.5; gx < 130; gx += 20) d += 'M' + gx + ' 0V' + H;
    svg.insertBefore(el('path', { d: d, 'class': 'vg' }), svg.firstChild);
    if (!c.dataset.pts) continue;
    seed = 1000 + i * 7919;
    var base = +c.dataset.base;
    var amp = c.dataset.n ? +c.dataset.n : 1.2;
    var kp = c.dataset.pts.trim().split(/\s+/).map(function (p) { return p.split(',').map(Number); });
    var pts = [], n = 0;
    for (var k = 0; k < kp.length - 1; k++) {
      var a = kp[k].length > 2 ? kp[k][2] : amp;
      var x0 = kp[k][0], y0 = kp[k][1], x1 = kp[k + 1][0], y1 = kp[k + 1][1];
      var steps = Math.max(1, Math.round((x1 - x0) / 0.7));
      for (var s = 0; s < steps; s++) {
        var t = s / steps;
        n = 0.35 * n + a * (rnd() * 2 - 1);
        var yy = y0 + (y1 - y0) * t + (s === 0 ? 0 : n);
        pts.push([x0 + (x1 - x0) * t, Math.max(0.5, Math.min(H - 0.5, yy))]);
      }
    }
    var last = kp[kp.length - 1];
    pts.push([last[0], last[1]]);
    var line = '';
    for (var j = 0; j < pts.length; j++) line += (j ? 'L' : 'M') + f1(pts[j][0]) + ' ' + f1(pts[j][1]);
    function poly(fn) {
      var p = 'M' + f1(pts[0][0]) + ' ' + base;
      for (var q = 0; q < pts.length; q++) p += 'L' + f1(pts[q][0]) + ' ' + f1(fn(pts[q][1]));
      return p + 'L' + f1(pts[pts.length - 1][0]) + ' ' + base + 'Z';
    }
    var inv = c.dataset.inv === '1';
    var fg = c.querySelector('.f');
    el('path', { d: poly(function (y) { return Math.min(y, base); }), 'class': inv ? 'fd' : 'fu' }, fg);
    el('path', { d: poly(function (y) { return Math.max(y, base); }), 'class': inv ? 'fu' : 'fd' }, fg);
    el('path', { d: line, 'class': 'ln' }, c.querySelector('.l'));
  }
})();
```
